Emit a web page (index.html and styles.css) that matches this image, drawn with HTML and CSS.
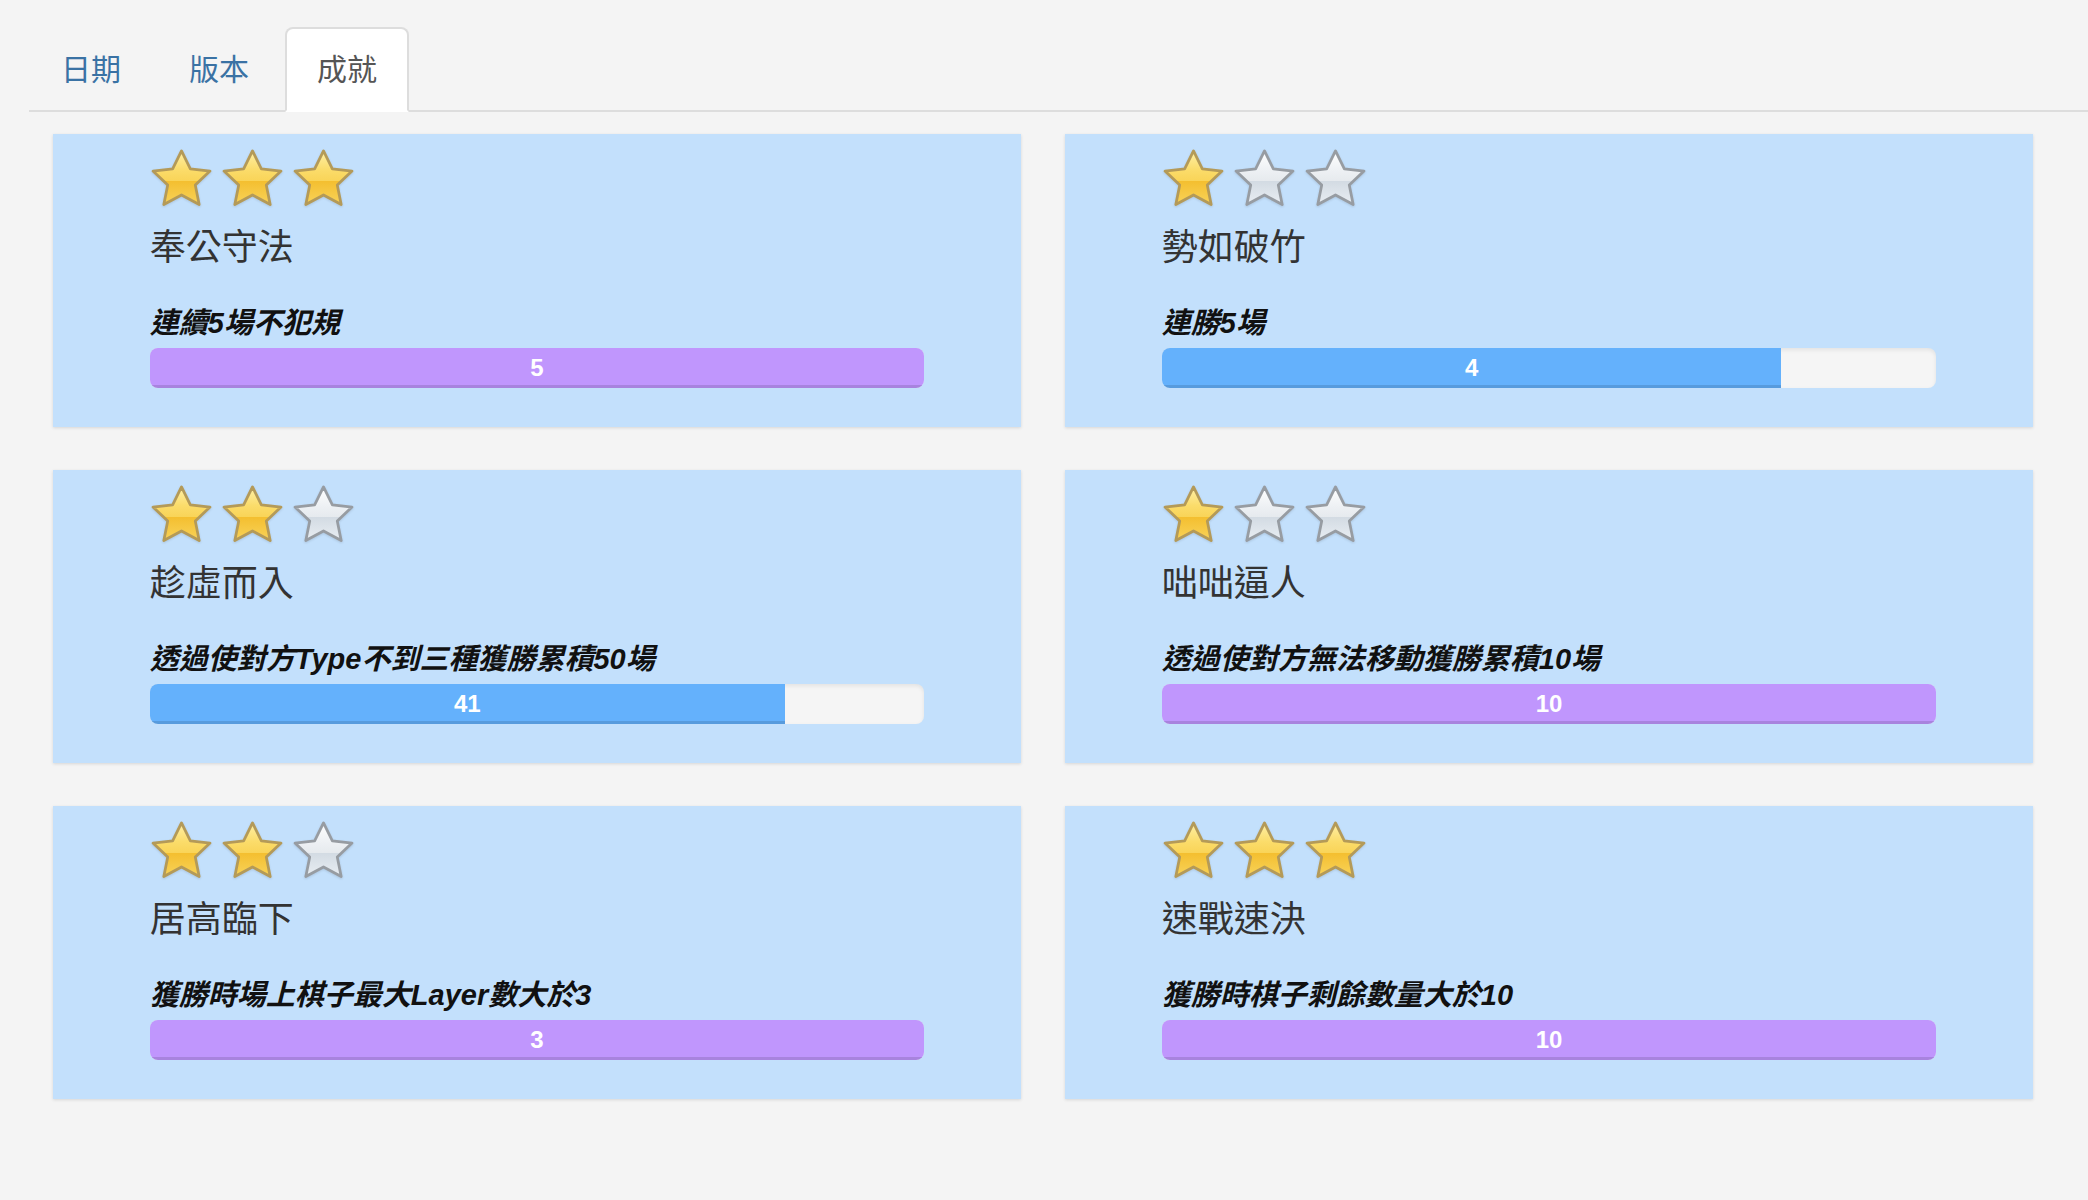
FILE: index.html
```html
<!DOCTYPE html>
<html lang="zh-Hant">
<head>
<meta charset="utf-8">
<title>成就</title>
<link rel="stylesheet" href="styles.css">
</head>
<body>
<svg class="defs" aria-hidden="true">
  <defs>
    <linearGradient id="gold" x1="0" y1="0" x2="0" y2="1">
      <stop offset="0" stop-color="#fff0a8"/>
      <stop offset="0.35" stop-color="#fbdc6a"/>
      <stop offset="0.56" stop-color="#f9d458"/>
      <stop offset="0.57" stop-color="#f4bf30"/>
      <stop offset="1" stop-color="#f8d35a"/>
    </linearGradient>
    <linearGradient id="silver" x1="0" y1="0" x2="0" y2="1">
      <stop offset="0" stop-color="#ffffff"/>
      <stop offset="0.35" stop-color="#eef1f4"/>
      <stop offset="0.56" stop-color="#e6eaee"/>
      <stop offset="0.57" stop-color="#d3dbe3"/>
      <stop offset="1" stop-color="#e9eef3"/>
    </linearGradient>
    <symbol id="star-on" viewBox="0 0 64 60">
      <path d="M32 3 L41 21.2 L61 23.5 L46 37.6 L50 57.5 L32 47.8 L14 57.5 L18 37.6 L3 23.5 L23 21.2 Z" fill="url(#gold)" stroke="#b49a58" stroke-width="2.8" stroke-linejoin="round"/>
    </symbol>
    <symbol id="star-off" viewBox="0 0 64 60">
      <path d="M32 3 L41 21.2 L61 23.5 L46 37.6 L50 57.5 L32 47.8 L14 57.5 L18 37.6 L3 23.5 L23 21.2 Z" fill="url(#silver)" stroke="#979ca2" stroke-width="2.8" stroke-linejoin="round"/>
    </symbol>
  </defs>
</svg>

<div class="page">
  <ul class="tabs">
    <li class="tab"><a href="#">日期</a></li>
    <li class="tab"><a href="#">版本</a></li>
    <li class="tab active"><a href="#">成就</a></li>
  </ul>

  <div class="grid">
    <div class="card">
      <div class="stars">
        <svg class="star"><use href="#star-on"/></svg>
        <svg class="star"><use href="#star-on"/></svg>
        <svg class="star"><use href="#star-on"/></svg>
      </div>
      <h4 class="title">奉公守法</h4>
      <p class="desc">連續5場不犯規</p>
      <div class="progress"><div class="bar purple" style="width:100%">5</div></div>
    </div>

    <div class="card">
      <div class="stars">
        <svg class="star"><use href="#star-on"/></svg>
        <svg class="star"><use href="#star-off"/></svg>
        <svg class="star"><use href="#star-off"/></svg>
      </div>
      <h4 class="title">勢如破竹</h4>
      <p class="desc">連勝5場</p>
      <div class="progress"><div class="bar blue" style="width:80%">4</div></div>
    </div>

    <div class="card">
      <div class="stars">
        <svg class="star"><use href="#star-on"/></svg>
        <svg class="star"><use href="#star-on"/></svg>
        <svg class="star"><use href="#star-off"/></svg>
      </div>
      <h4 class="title">趁虛而入</h4>
      <p class="desc">透過使對方Type不到三種獲勝累積50場</p>
      <div class="progress"><div class="bar blue" style="width:82%">41</div></div>
    </div>

    <div class="card">
      <div class="stars">
        <svg class="star"><use href="#star-on"/></svg>
        <svg class="star"><use href="#star-off"/></svg>
        <svg class="star"><use href="#star-off"/></svg>
      </div>
      <h4 class="title">咄咄逼人</h4>
      <p class="desc">透過使對方無法移動獲勝累積10場</p>
      <div class="progress"><div class="bar purple" style="width:100%">10</div></div>
    </div>

    <div class="card">
      <div class="stars">
        <svg class="star"><use href="#star-on"/></svg>
        <svg class="star"><use href="#star-on"/></svg>
        <svg class="star"><use href="#star-off"/></svg>
      </div>
      <h4 class="title">居高臨下</h4>
      <p class="desc">獲勝時場上棋子最大Layer數大於3</p>
      <div class="progress"><div class="bar purple" style="width:100%">3</div></div>
    </div>

    <div class="card">
      <div class="stars">
        <svg class="star"><use href="#star-on"/></svg>
        <svg class="star"><use href="#star-on"/></svg>
        <svg class="star"><use href="#star-on"/></svg>
      </div>
      <h4 class="title">速戰速決</h4>
      <p class="desc">獲勝時棋子剩餘數量大於10</p>
      <div class="progress"><div class="bar purple" style="width:100%">10</div></div>
    </div>
  </div>
</div>
</body>
</html>
```

FILE: styles.css
```css
* { box-sizing: border-box; }

html, body {
  margin: 0;
  padding: 0;
  background: #f4f4f4;
  font-family: "Liberation Sans", "Noto Sans CJK TC", sans-serif;
  color: #333;
}

.defs {
  position: absolute;
  width: 0;
  height: 0;
  overflow: hidden;
}

.page {
  padding: 27px 0 60px 29px;
}

.tabs {
  list-style: none;
  margin: 0;
  padding: 0;
  display: flex;
  border-bottom: 2px solid #dddddd;
}

.tab {
  margin-right: 4px;
  margin-bottom: -2px;
}

.tab a {
  display: block;
  padding: 20px 30px;
  font-size: 30px;
  line-height: 41px;
  color: #3a72a4;
  text-decoration: none;
  border: 2px solid transparent;
  border-radius: 8px 8px 0 0;
}

.tab.active a {
  color: #555555;
  background: #ffffff;
  border-color: #dddddd;
  border-bottom-color: transparent;
}

.grid {
  display: grid;
  grid-template-columns: 1fr 1fr;
  column-gap: 44px;
  row-gap: 43px;
  margin: 22px 55px 0 24px;
}

.card {
  background: #c3e0fc;
  padding: 14px 10% 0 10%;
  box-shadow: 0 1px 3px rgba(0, 0, 0, 0.12);
}

.stars {
  display: flex;
  gap: 8px;
  height: 58px;
}

.star {
  width: 63px;
  height: 59px;
  filter: drop-shadow(0 1px 1px rgba(0, 0, 0, 0.12));
}

.title {
  margin: 22px 0 0 0;
  font-size: 36px;
  line-height: 40px;
  font-weight: 400;
  color: #333333;
}

.desc {
  margin: 35px 0 0 0;
  font-size: 29px;
  line-height: 40px;
  font-weight: 700;
  font-style: italic;
  color: #111111;
}

.progress {
  margin: 5px 0 39px 0;
  height: 40px;
  background: #f5f5f5;
  border-radius: 8px;
  overflow: hidden;
  box-shadow: inset 0 2px 4px rgba(0, 0, 0, 0.08);
}

.bar {
  height: 100%;
  color: #ffffff;
  font-size: 24px;
  font-weight: 700;
  line-height: 40px;
  text-align: center;
  box-shadow: inset 0 -3px 0 rgba(0, 0, 0, 0.12);
}

.bar.blue { background: #64b1fc; }
.bar.purple { background: #c096fd; }
```
